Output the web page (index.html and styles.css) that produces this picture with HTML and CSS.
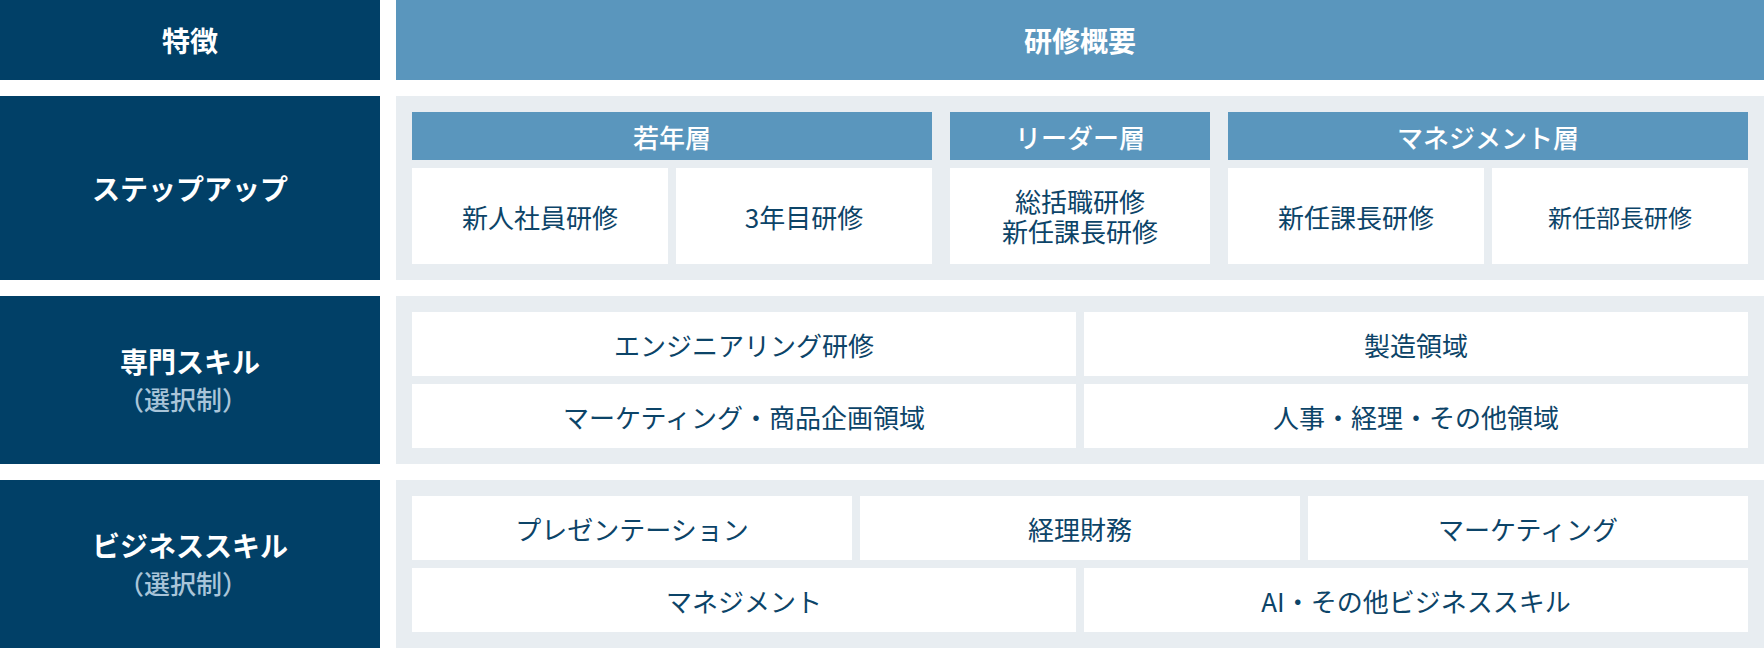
FILE: index.html
```html
<!DOCTYPE html>
<html lang="ja">
<head>
<meta charset="utf-8">
<title>研修概要</title>
<link rel="stylesheet" href="styles.css">
</head>
<body>
<div class="table">
  <div class="label label-head">特徴</div>
  <div class="head">研修概要</div>

  <div class="label">ステップアップ</div>
  <div class="panel steps">
    <div class="group">
      <div class="group-title">若年層</div>
      <div class="group-cells two">
        <div class="cell">新人社員研修</div>
        <div class="cell">3年目研修</div>
      </div>
    </div>
    <div class="group">
      <div class="group-title">リーダー層</div>
      <div class="group-cells">
        <div class="cell cell-multi"><span class="line">総括職研修</span><span class="line">新任課長研修</span></div>
      </div>
    </div>
    <div class="group">
      <div class="group-title">マネジメント層</div>
      <div class="group-cells two">
        <div class="cell">新任課長研修</div>
        <div class="cell cell-small">新任部長研修</div>
      </div>
    </div>
  </div>

  <div class="label"><span class="label-main">専門スキル</span><span class="label-sub">（選択制）</span></div>
  <div class="panel skills">
    <div class="cell span3">エンジニアリング研修</div>
    <div class="cell span3">製造領域</div>
    <div class="cell span3">マーケティング・商品企画領域</div>
    <div class="cell span3">人事・経理・その他領域</div>
  </div>

  <div class="label"><span class="label-main">ビジネススキル</span><span class="label-sub">（選択制）</span></div>
  <div class="panel skills">
    <div class="cell span2">プレゼンテーション</div>
    <div class="cell span2">経理財務</div>
    <div class="cell span2">マーケティング</div>
    <div class="cell span3">マネジメント</div>
    <div class="cell span3">AI・その他ビジネススキル</div>
  </div>
</div>
</body>
</html>
```

FILE: styles.css
```css
html, body {
  margin: 0;
  padding: 0;
  background: #ffffff;
}

body {
  font-family: "Noto Sans CJK JP", "Noto Sans", sans-serif;
  width: 1764px;
  height: 648px;
  overflow: hidden;
}

.table {
  display: grid;
  grid-template-columns: 380px 1fr;
  grid-template-rows: 80px 184px 168px 168px;
  column-gap: 16px;
  row-gap: 16px;
}

.label {
  background: #014067;
  color: #ffffff;
  font-size: 28px;
  font-weight: 700;
  display: flex;
  flex-direction: column;
  align-items: center;
  justify-content: center;
  text-align: center;
}

.label-main {
  display: block;
  line-height: 38px;
}

.label-sub {
  display: block;
  line-height: 38px;
  font-size: 26px;
  font-weight: 500;
  color: #a9c5d9;
  margin-right: 14px;
}

.head {
  background: #5a96bd;
  color: #ffffff;
  font-size: 28px;
  font-weight: 700;
  display: flex;
  align-items: center;
  justify-content: center;
}

.panel {
  background: #e8edf1;
  padding: 16px;
}

.steps {
  display: grid;
  grid-template-columns: 2fr 1fr 2fr;
  column-gap: 18px;
}

.group {
  display: grid;
  grid-template-rows: 48px 96px;
  row-gap: 8px;
}

.group-title {
  background: #5a96bd;
  color: #ffffff;
  font-size: 26px;
  font-weight: 500;
  display: flex;
  align-items: center;
  justify-content: center;
}

.group-cells {
  display: grid;
  grid-template-columns: 1fr;
  column-gap: 8px;
}

.group-cells.two {
  grid-template-columns: 1fr 1fr;
}

.cell {
  background: #ffffff;
  color: #0c4468;
  font-size: 26px;
  font-weight: 400;
  display: flex;
  flex-direction: column;
  align-items: center;
  justify-content: center;
  text-align: center;
}

.cell-multi {
  line-height: 30px;
}

.cell-multi .line {
  display: block;
  height: 30px;
}

.cell-small {
  font-size: 24px;
}

.skills {
  display: grid;
  grid-template-columns: repeat(6, 1fr);
  grid-auto-rows: 64px;
  gap: 8px;
}

.span2 {
  grid-column: span 2;
}

.span3 {
  grid-column: span 3;
}
```
